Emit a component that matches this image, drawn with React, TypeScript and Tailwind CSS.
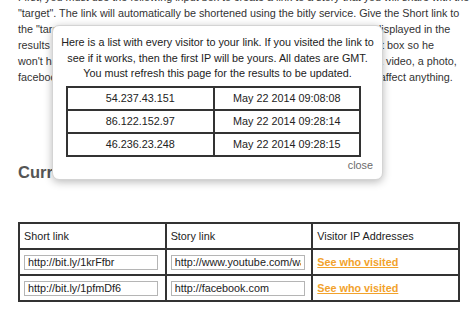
import React from "react";

const font = "font-['Liberation_Sans',Arial,sans-serif]";

const visitors = [
  { ip: "54.237.43.151", date: "May 22 2014 09:08:08" },
  { ip: "86.122.152.97", date: "May 22 2014 09:28:14" },
  { ip: "46.236.23.248", date: "May 22 2014 09:28:15" },
];

const links = [
  { short: "http://bit.ly/1krFfbr", story: "http://www.youtube.com/watch?v=dQw4w9WgXcQ" },
  { short: "http://bit.ly/1pfmDf6", story: "http://facebook.com" },
];

function VisitorsModal() {
  return (
    <div className="absolute left-[52px] top-[25px] w-[331px] h-[155px] bg-white rounded-[7px] border border-[#d4d4d4] shadow-[0_2px_9px_rgba(0,0,0,0.28)] text-[#222]">
      <p className="pt-[9px] text-center leading-[15.5px]">
        Here is a list with every visitor to your link. If you visited the link to
        <br />
        see if it works, then the first IP will be yours. All dates are GMT.
        <br />
        You must refresh this page for the results to be updated.
      </p>
      <table className="ml-[13px] mt-[4px] w-[295px] border-separate border-spacing-0 border border-[#333]">
        <tbody>
          {visitors.map((v) => (
            <tr key={v.ip} className="h-[23px]">
              <td className="w-1/2 border border-[#333] text-center p-0">{v.ip}</td>
              <td className="w-1/2 border border-[#333] text-center p-0">{v.date}</td>
            </tr>
          ))}
        </tbody>
      </table>
      <div className="mt-0 pr-[9px] text-right text-[#6b6b6b] leading-[16px]">close</div>
    </div>
  );
}

export default function App() {
  return (
    <div className={`relative w-[474px] h-[321px] overflow-hidden bg-white ${font} text-[10.8px]`}>
      <div className="pl-[18px]">
        <p className="-mt-[11px] text-[#333] leading-[16px] whitespace-nowrap">
          First, you must use the following input box to create a link to a story that you will share with the
          <br />
          "target". The link will automatically be shortened using the bitly service. Give the Short link to
          <br />
          the "target" field. When a visitor clicks the Short link, the IP address will be displayed in the
          <br />
          results table below. Send the Short link to your friends or write it into the chat box so he
          <br />
          won't have any idea about it. The story can be anything you like: an article, a video, a photo,
          <br />
          facebook post or anything. The link is only used to track the IP, so it doesn't affect anything.
        </p>

        <h2 className="mt-[77px] text-[16.5px] leading-[20px] font-bold text-[#555]">Current links</h2>

        <table className="mt-[40px] w-[442px] table-fixed border-separate border-spacing-0 border border-[#333] text-[#222]">
          <thead>
            <tr className="h-[26px]">
              <th className="border border-[#333] px-[4px] text-left font-normal">Short link</th>
              <th className="border border-[#333] px-[4px] text-left font-normal">Story link</th>
              <th className="border border-[#333] px-[4px] text-left font-normal">Visitor IP Addresses</th>
            </tr>
          </thead>
          <tbody>
            {links.map((l) => (
              <tr key={l.short} className="h-[26px]">
                <td className="border border-[#333] px-[4px]">
                  <input
                    readOnly
                    value={l.short}
                    className="block w-[134px] h-[15px] border border-[#b5b5b5] px-[3px] text-[10.8px] text-[#222] outline-none"
                  />
                </td>
                <td className="border border-[#333] px-[4px]">
                  <input
                    readOnly
                    value={l.story}
                    className="block w-[134px] h-[15px] border border-[#b5b5b5] px-[3px] text-[10.8px] text-[#222] outline-none"
                  />
                </td>
                <td className="border border-[#333] px-[4px]">
                  <a href="#" className="font-bold text-[#f2a22c] underline">
                    See who visited
                  </a>
                </td>
              </tr>
            ))}
          </tbody>
        </table>
      </div>

      <VisitorsModal />
    </div>
  );
}
